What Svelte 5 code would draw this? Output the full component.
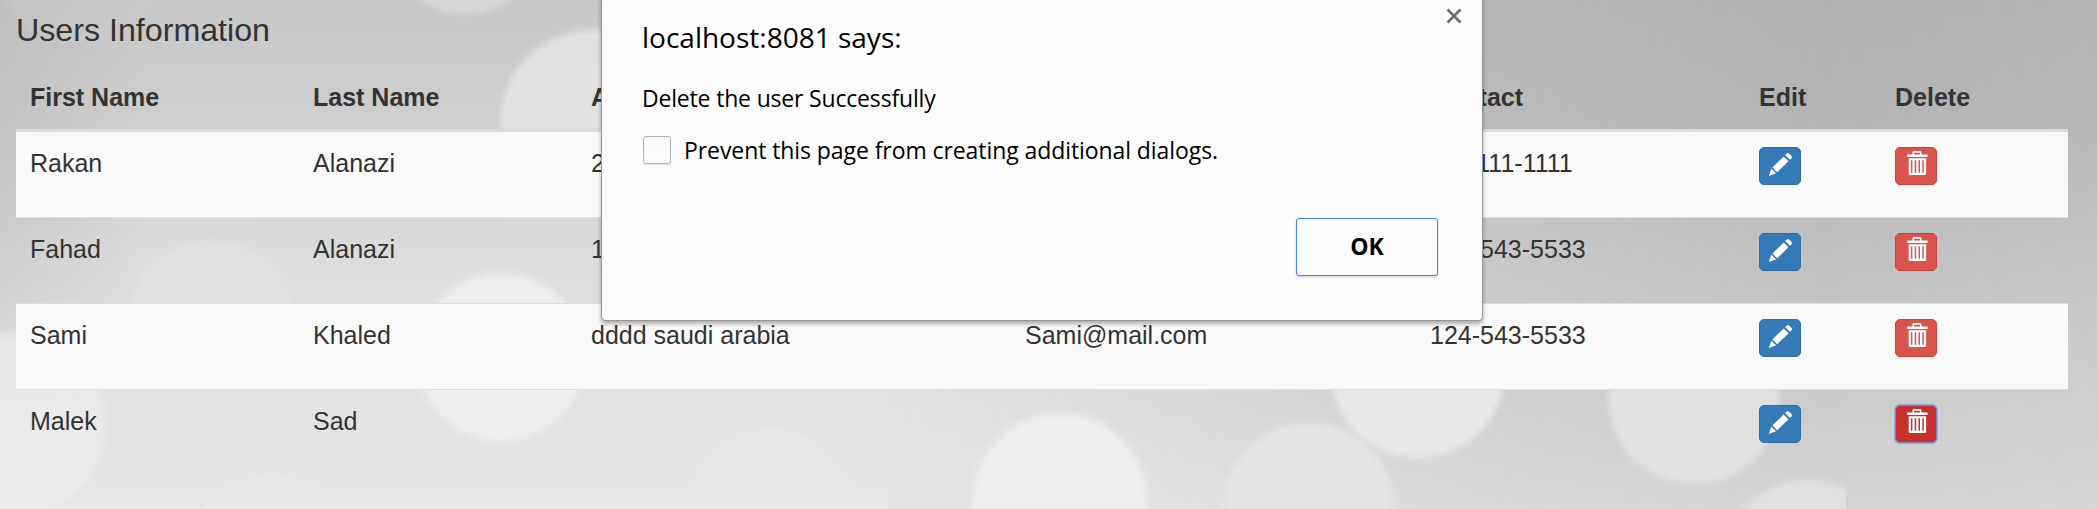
<script>
  const columns = ['First Name', 'Last Name', 'Address', 'Email', 'Contact', 'Edit', 'Delete'];
  const users = [
    { first: 'Rakan', last: 'Alanazi', address: '2', email: '', contact: '111-111-1111' },
    { first: 'Fahad', last: 'Alanazi', address: '1', email: '', contact: '124-543-5533' },
    { first: 'Sami', last: 'Khaled', address: 'dddd saudi arabia', email: 'Sami@mail.com', contact: '124-543-5533' },
    { first: 'Malek', last: 'Sad', address: '', email: '', contact: '', active: true }
  ];
  const bokeh = [
    [80, -45, 88, '#cdcdcd', 0.4],
    [465, -70, 84, '#dcdcdc', 0.8],
    [592, 122, 92, '#e5e5e5', 0.85],
    [212, 322, 82, '#e5e5e5', 0.45],
    [501, 357, 84, '#f0f0f0', 0.9],
    [15, 425, 91, '#eeeeee', 0.75],
    [270, 560, 84, '#ebebeb', 0.6],
    [770, 510, 82, '#ebebeb', 0.5],
    [1060, 500, 87, '#f1f1f1', 0.9],
    [1309, 508, 85, '#e8e8e8', 0.75],
    [1418, 370, 87, '#ececec', 0.9],
    [1694, 398, 86, '#e3e3e3', 0.9]
  ];
</script>

<main>
  <svg class="backdrop" viewBox="0 0 2097 509" aria-hidden="true">
    <defs>
      <linearGradient id="light" x1="0" y1="0" x2="0" y2="1">
        <stop offset="0" stop-color="#c7c7c7" />
        <stop offset=".25" stop-color="#cfcfcf" />
        <stop offset=".5" stop-color="#dcdcdc" />
        <stop offset=".77" stop-color="#e2e2e2" />
        <stop offset="1" stop-color="#e7e7e7" />
      </linearGradient>
      <linearGradient id="dark" x1="0" y1="0" x2="0" y2="1">
        <stop offset="0" stop-color="#b0b0b0" />
        <stop offset=".25" stop-color="#b4b4b4" />
        <stop offset=".5" stop-color="#c0c0c0" />
        <stop offset=".77" stop-color="#cacaca" />
        <stop offset="1" stop-color="#d4d4d4" />
      </linearGradient>
      <linearGradient id="fade" x1="0" y1="0" x2="1" y2="0">
        <stop offset=".42" stop-color="#000" />
        <stop offset=".72" stop-color="#bbb" />
        <stop offset=".87" stop-color="#fff" />
        <stop offset="1" stop-color="#ddd" />
      </linearGradient>
      <linearGradient id="edge" x1="0" y1="0" x2="1" y2="0">
        <stop offset="0" stop-color="#b0b0b0" stop-opacity=".35" />
        <stop offset="1" stop-color="#b0b0b0" stop-opacity="0" />
      </linearGradient>
      <linearGradient id="lower" x1="0" y1="0" x2="0" y2="1">
        <stop offset=".6" stop-color="#fff" />
        <stop offset="1" stop-color="#000" />
      </linearGradient>
      <mask id="side"><rect width="2097" height="509" fill="url(#fade)" /></mask>
      <mask id="drop"><rect width="140" height="400" fill="url(#lower)" /></mask>
      <filter id="soft" x="-10%" y="-10%" width="120%" height="120%"><feGaussianBlur stdDeviation="3" /></filter>
      <clipPath id="tile"><rect width="1846" height="509" /></clipPath>
    </defs>
    <rect width="2097" height="509" fill="url(#light)" />
    <rect width="2097" height="509" fill="url(#dark)" mask="url(#side)" />
    <rect width="140" height="400" fill="url(#edge)" mask="url(#drop)" />
    {#each bokeh as [x, y, r, fill, opacity]}
      <circle cx={x} cy={y} {r} {fill} {opacity} filter="url(#soft)" />
    {/each}
    <g clip-path="url(#tile)">
      <circle cx="1808" cy="563" r="83" fill="#e0e0e0" filter="url(#soft)" />
    </g>
  </svg>

  <section>
    <h4>Users Information</h4>
    <div class="row head">
      {#each columns as name}<div class="cell">{name}</div>{/each}
    </div>
    {#each users as user}
      <div class="row">
        <div class="cell">{user.first}</div>
        <div class="cell">{user.last}</div>
        <div class="cell">{user.address}</div>
        <div class="cell">{user.email}</div>
        <div class="cell">{user.contact}</div>
        <div class="cell">
          <button class="icon edit" aria-label="Edit">
            <svg viewBox="0 0 42 38">
              <g fill="#fff">
                <path d="M27.7 6.6q1.2-1.1 2.4 0l2.4 2.4q1 1.100 0 2.200l-1.600 1.600-4.800-4.700z" />
                <path d="M24.700 9.500l4.800 4.800L18.200 25.300l-4.800-4.800z" />
                <path d="M12.300 21.700l4.800 4.600-7.300 2.600z" />
              </g>
            </svg>
          </button>
        </div>
        <div class="cell">
          <button class="icon delete" class:active={user.active} aria-label="Delete">
            <svg viewBox="0 0 42 38">
              <g fill="#fff">
                <path fill-rule="evenodd" d="M18.800 4h6.400q1.300 0 1.300 1.300V8h-9V5.300q0-1.300 1.300-1.300zM19 5.700V8h6V5.700z" />
                <rect x="12" y="7.500" width="20.700" height="2.400" rx=".6" />
                <path fill-rule="evenodd" d="M13.700 11.200h17.400v15.500q0 1.400-1.400 1.400H15.100q-1.400 0-1.400-1.400zM15.900 13.200v12.600h1.500V13.200zM19.700 13.200v12.600h1.500V13.200zM23.500 13.200v12.600h1.500V13.200zM27.300 13.200v12.600h1.500V13.200z" />
              </g>
            </svg>
          </button>
        </div>
      </div>
    {/each}
  </section>

  <div class="dialog" role="alertdialog" aria-label="Message">
    <svg class="close" viewBox="0 0 16 16"><path d="M1.500 1.500l13 13M14.500 1.500l-13 13" stroke="#6e6e6e" stroke-width="2.700" /></svg>
    <h2>localhost:8081 says:</h2>
    <p>Delete the user Successfully</p>
    <label><span class="box"></span><span class="prevent">Prevent this page from creating additional dialogs.</span></label>
    <button class="ok">OK</button>
  </div>
</main>

<style>
  :global(body) { overflow: hidden; }
  main {
    position: relative;
    box-sizing: border-box;
    height: 509px;
    padding: 0 29px 0 16px;
    overflow: hidden;
    color: #333;
    font: 25px/35px "Liberation Sans", Arial, sans-serif;
  }
  .backdrop { position: absolute; inset: 0; width: 2097px; height: 509px; }
  section { position: relative; }
  h4 {
    margin: 0;
    padding-top: 13px;
    height: 66px;
    font-size: 32.2px;
    font-weight: 400;
  }
  .row {
    display: grid;
    grid-template-columns: 283px 278px 434px 405px 329px 136px 187px;
    height: 86px;
    box-sizing: border-box;
    border-top: 1px solid #ddd;
  }
  .row.head { height: 50px; border-top: 0; font-weight: 700; }
  .head + .row { border-top-width: 3px; height: 88px; }
  .row:nth-of-type(even) { background: #f9f9f9; }
  .cell { padding: 14px 0 0 14px; white-space: nowrap; }
  .head .cell { padding-top: 1px; }
  .icon {
    display: block;
    width: 42px;
    height: 38px;
    margin-top: 1px;
    padding: 0;
    border: 1px solid #2e6da4;
    border-radius: 5px;
    background: #337ab7;
  }
  .icon svg { display: block; width: 42px; height: 38px; margin: -1px; }
  .delete { background: #d9534f; border-color: #d43f3a; }
  .delete.active { background: #c9302c; border-color: #8585c8; box-shadow: 0 0 0 1px #86a9e8; }
  .dialog {
    position: absolute;
    left: 601px;
    top: -4px;
    width: 882px;
    height: 325px;
    box-sizing: border-box;
    padding: 0 44px 0 40px;
    border: 1px solid #969696;
    border-radius: 4px;
    background: #fbfbfb;
    box-shadow: 0 3px 4px rgba(0, 0, 0, .3);
    color: #000;
    font: 23px/32px "Open Sans", "Noto Sans", sans-serif;
  }
  .close { position: absolute; left: 844px; top: 11px; width: 16px; height: 16px; }
  h2 { margin: 0; padding-top: 20px; font-size: 28px; line-height: 40px; font-weight: 400; }
  p { margin: 25px 0 0; letter-spacing: -.18px; }
  label { display: flex; align-items: center; gap: 13px; margin-top: 20px; letter-spacing: -.08px; }
  .box {
    width: 26px;
    height: 26px;
    margin-left: 1px;
    border: 1px solid #b4b4b4;
    border-radius: 3px;
    background: linear-gradient(#f7f7f7, #fcfcfc);
    box-shadow: 0 1px 1px rgba(0, 0, 0, .12);
  }
  .ok {
    display: block;
    width: 142px;
    height: 58px;
    margin: 52px 0 0 auto;
    padding: 0 0 3px;
    border: 1px solid #4285f4;
    border-radius: 3px;
    background: #fcfcfc;
    box-shadow: 0 1px 2px rgba(0, 0, 0, .2);
    color: #000;
    font: 700 23px "Open Sans", sans-serif;
  }
</style>
